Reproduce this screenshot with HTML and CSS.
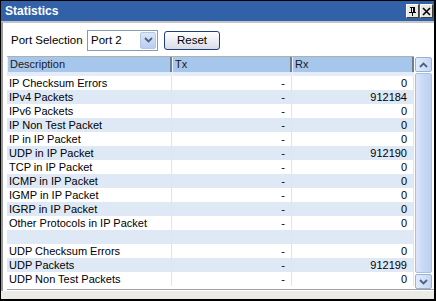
FILE: index.html
```html
<!DOCTYPE html>
<html lang="en">
<head>
    <meta charset="utf-8">
    <title>Statistics</title>
    <link rel="stylesheet" href="styles.css">
</head>
<body>
    <div class="window">
        <div class="titlebar">
            <span class="title">Statistics</span>
            <span class="tbtn">
                <svg width="9" height="11" viewBox="0 0 9 11"><path d="M2 1h5M3 1v5M6 1v5M1 6h7M4.5 6v4" stroke="#000" stroke-width="1" fill="none" shape-rendering="crispEdges"/><rect x="5" y="1" width="1" height="5" fill="#000"/></svg>
            </span>
            <span class="tbtn">
                <svg width="9" height="9" viewBox="0 0 9 9"><path d="M1 1L8 8M8 1L1 8" stroke="#000" stroke-width="1.6"/></svg>
            </span>
        </div>
        <div class="panel">
            <div class="toolbar">
                <span class="lbl">Port Selection</span>
                <div class="combo">
                    <span class="combo-text">Port 2</span>
                    <span class="combo-btn">
                        <svg width="9" height="6" viewBox="0 0 9 6"><path d="M1 1l3.5 3.5L8 1" stroke="#4d6185" stroke-width="1.8" fill="none"/></svg>
                    </span>
                </div>
                <button class="reset">Reset</button>
            </div>
            <div class="gridwrap">
                <div class="grid">
                    <div class="head">
                        <div class="hcell c1">Description</div>
                        <div class="hcell c2">Tx</div>
                        <div class="hcell c3">Rx</div>
                    </div>
                    <div class="spacer"></div>
                    <div class="rows" id="rows"></div>
                </div>
                <div class="scroll">
                    <div class="sbtn">
                        <svg width="9" height="6" viewBox="0 0 9 6"><path d="M1 5l3.5-3.5L8 5" stroke="#4d6185" stroke-width="1.8" fill="none"/></svg>
                    </div>
                    <div class="thumb"></div>
                    <div class="sbtn">
                        <svg width="9" height="6" viewBox="0 0 9 6"><path d="M1 1l3.5 3.5L8 1" stroke="#4d6185" stroke-width="1.8" fill="none"/></svg>
                    </div>
                </div>
            </div>
        </div>
        <div class="status"></div>
    </div>
    <script>
    var data = [
        ["IP Checksum Errors", "-", "0"],
        ["IPv4 Packets", "-", "912184"],
        ["IPv6 Packets", "-", "0"],
        ["IP Non Test Packet", "-", "0"],
        ["IP in IP Packet", "-", "0"],
        ["UDP in IP Packet", "-", "912190"],
        ["TCP in IP Packet", "-", "0"],
        ["ICMP in IP Packet", "-", "0"],
        ["IGMP in IP Packet", "-", "0"],
        ["IGRP in IP Packet", "-", "0"],
        ["Other Protocols in IP Packet", "-", "0"],
        ["", "", ""],
        ["UDP Checksum Errors", "-", "0"],
        ["UDP Packets", "-", "912199"],
        ["UDP Non Test Packets", "-", "0"]
    ];
    var rows = document.getElementById("rows");
    for (var i = 0; i < data.length; i++) {
        var r = document.createElement("div");
        r.className = "row" + (i % 2 ? " alt" : "");
        r.innerHTML = '<div class="cell c1">' + data[i][0] + '</div>' +
            '<div class="cell c2 num">' + data[i][1] + '</div>' +
            '<div class="cell c3 num">' + data[i][2] + '</div>';
        rows.appendChild(r);
    }
    </script>
</body>
</html>
```
FILE: styles.css
```css
body {
    margin: 0;
    font-family: 'Liberation Sans', Arial, sans-serif;
    font-size: 11px;
    color: #000;
}

.window {
    width: 436px;
    height: 301px;
    box-sizing: border-box;
    border: 1px solid #000;
    border-right-width: 2px;
    border-bottom-width: 2px;
    background: #ecebe6;
    display: flex;
    flex-direction: column;
}

.titlebar {
    height: 20px;
    background: #3161a8;
    display: flex;
    align-items: center;
    padding: 0 1px 0 4px;
    gap: 1px;
}

.title {
    flex: 1;
    color: #fff;
    font-weight: bold;
    font-size: 12px;
}

.tbtn {
    width: 13px;
    height: 14px;
    background: #e8e8e8;
    border: 1px solid #fff;
    border-right-color: #404040;
    border-bottom-color: #404040;
    box-sizing: border-box;
    display: flex;
    align-items: center;
    justify-content: center;
}

.panel {
    flex: 1;
    background: #fff;
    border-top: 2px solid #c4c4c4;
    border-left: 2px solid #9a9a9a;
    margin-left: 0;
    display: flex;
    flex-direction: column;
}

.toolbar {
    height: 33px;
    display: flex;
    align-items: center;
    padding-left: 8px;
    padding-top: 1px;
    box-sizing: border-box;
}

.lbl {
    width: 76px;
    font-size: 11.5px;
}

.combo {
    width: 71px;
    height: 21px;
    box-sizing: border-box;
    border: 1px solid #7f9db9;
    display: flex;
    align-items: stretch;
}

.combo-text {
    flex: 1;
    padding-left: 3px;
    line-height: 19px;
    font-size: 11.5px;
}

.combo-btn {
    width: 16px;
    margin: 1px;
    box-sizing: border-box;
    border: 1px solid #b7c7e2;
    border-radius: 2px;
    background: linear-gradient(#dbe6f8, #b9cdef);
    display: flex;
    align-items: center;
    justify-content: center;
}

.reset {
    margin-left: 6px;
    width: 56px;
    height: 19px;
    box-sizing: border-box;
    border: 1px solid #1f3d7a;
    border-radius: 3px;
    background: linear-gradient(#ffffff, #e9ebf1 60%, #d6dbe6);
    font-family: 'Liberation Sans', Arial, sans-serif;
    font-size: 11.5px;
    padding: 0;
    color: #000;
}

.gridwrap {
    display: flex;
    margin-left: 4px;
    height: 233px;
    border-bottom: 1px solid #a0a0a0;
}

.grid {
    width: 407px;
    border-top: 1px solid #b0b0b0;
}

.head {
    display: flex;
    height: 15px;
}

.hcell {
    box-sizing: border-box;
    background: #a6c6ec;
    border-left: 1px solid #e8f0fa;
    border-right: 2px solid #6f7f92;
    padding-left: 2px;
    line-height: 15px;
    color: #1a1a1a;
}

.c1 { width: 165px; }
.c2 { width: 120px; }
.c3 { width: 122px; }

.spacer {
    height: 4px;
    background: #e4ecf7;
}

.row {
    display: flex;
    height: 14px;
    background: #fff;
}

.row.alt {
    background: #dfe8f5;
}

.cell {
    box-sizing: border-box;
    line-height: 14px;
    padding-left: 2px;
    white-space: nowrap;
    border-right: 1px solid #e4e4e4;
}

.cell.c1 {
    padding-left: 2px;
}

.num {
    text-align: right;
    padding-right: 6px;
}

.scroll {
    width: 17px;
    margin-left: 1px;
    display: flex;
    flex-direction: column;
    gap: 1px;
    padding-top: 1px;
}

.sbtn {
    height: 15px;
    box-sizing: border-box;
    border: 1px solid #98b1d6;
    border-radius: 2px;
    background: linear-gradient(to right, #e1ebfb, #c6d7f3);
    display: flex;
    align-items: center;
    justify-content: center;
}

.thumb {
    flex: 1;
    box-sizing: border-box;
    border: 1px solid #a8bfe0;
    border-radius: 2px;
    background: linear-gradient(to right, #dbe6f8, #c8d9f4 50%, #bcd0f0);
}

.status {
    height: 8px;
}
```
